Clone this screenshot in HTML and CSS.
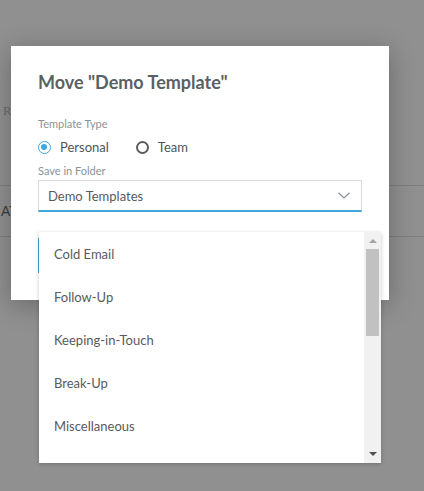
FILE: index.html
```html
<!DOCTYPE html>
<html>
<head>
<meta charset="utf-8">
<link rel="stylesheet" href="styles.css">
</head>
<body>
<div class="page">
  <div class="page-sub">R</div>
  <div class="page-row">
    <span class="page-tab">AT</span>
  </div>
</div>

<div class="modal">
  <h2 class="modal-title">Move "Demo Template"</h2>
  <div class="field-label first">Template Type</div>
  <div class="radios">
    <label class="radio checked"><span class="radio-dot"></span>Personal</label>
    <label class="radio"><span class="radio-dot"></span>Team</label>
  </div>
  <div class="field-label second">Save in Folder</div>
  <div class="select">
    <span>Demo Templates</span>
    <svg class="chev" width="12" height="7" viewBox="0 0 12 7"><path d="M0.5 0.8 L6 6 L11.5 0.8" fill="none" stroke="#8a9095" stroke-width="1.2"/></svg>
  </div>
  <div class="actions">
    <button class="btn-primary"></button>
  </div>
</div>

<div class="dropdown">
  <ul class="options">
    <li>Cold Email</li>
    <li>Follow-Up</li>
    <li>Keeping-in-Touch</li>
    <li>Break-Up</li>
    <li>Miscellaneous</li>
  </ul>
  <div class="scrollbar">
    <span class="arrow up"></span>
    <div class="thumb-area"><div class="thumb"></div></div>
    <span class="arrow down"></span>
  </div>
</div>
</body>
</html>
```

FILE: styles.css
```css
* { box-sizing: border-box; }
html, body { margin: 0; padding: 0; }
body {
  width: 424px;
  height: 491px;
  background: #909090;
  font-family: Lato, "Open Sans", sans-serif;
  overflow: hidden;
  position: relative;
}

.page {
  padding-top: 103px;
}
.page-sub {
  font-family: "Liberation Serif", serif;
  font-size: 13px;
  color: #6a6a6a;
  padding-left: 3px;
  height: 82px;
}
.page-row {
  border-top: 1px solid #7d7d7d;
  border-bottom: 1px solid #7d7d7d;
  height: 52px;
  display: flex;
  align-items: center;
}
.page-tab {
  font-family: "Liberation Sans", sans-serif;
  font-size: 14px;
  color: #3a3a3a;
  padding-left: 1px;
}

.modal {
  position: absolute;
  left: 11px;
  top: 46px;
  width: 378px;
  height: 254px;
  background: #fff;
  box-shadow: 0 5px 25px rgba(0, 0, 0, 0.28);
  padding: 25px 27px 0;
}
.modal-title {
  margin: 0;
  font-size: 18px;
  line-height: 22px;
  font-weight: 700;
  color: #596164;
}
.field-label {
  font-size: 11px;
  line-height: 14px;
  color: #8b9296;
}
.field-label.first { margin-top: 24px; }
.field-label.second { margin-top: 5px; }
.radios {
  display: flex;
  gap: 27px;
  height: 24px;
  align-items: center;
  margin-top: 4px;
}
.radio {
  display: flex;
  align-items: center;
  gap: 9px;
  font-size: 13px;
  color: #4e5558;
}
.radio-dot {
  width: 13px;
  height: 13px;
  border-radius: 50%;
  border: 2px solid #5c5c5c;
  position: relative;
}
.radio.checked .radio-dot {
  border: 1.5px solid #3fa6de;
}
.radio.checked .radio-dot::after {
  content: "";
  position: absolute;
  left: 2px; top: 2px;
  width: 6px; height: 6px;
  border-radius: 50%;
  background: #3fa6de;
}
.select {
  margin-top: 2px;
  height: 32px;
  border: 1px solid #d9dcdd;
  border-bottom: 2px solid #3fa6de;
  display: flex;
  align-items: center;
  justify-content: space-between;
  padding: 0 11px 0 9px;
  font-size: 13px;
  color: #555b5e;
}
.actions {
  margin-top: 26px;
}
.btn-primary {
  display: block;
  width: 100px;
  height: 35px;
  border: none;
  background: #3fa6de;
}

.dropdown {
  position: absolute;
  left: 39px;
  top: 232px;
  width: 342px;
  height: 231px;
  background: #fff;
  box-shadow: 0 1px 4px rgba(0, 0, 0, 0.22);
  display: flex;
}
.options {
  list-style: none;
  margin: 0;
  padding: 0;
  flex: 1;
}
.options li {
  height: 43px;
  display: flex;
  align-items: center;
  padding-left: 15px;
  font-size: 13px;
  color: #5a5a5a;
}
.scrollbar {
  width: 17px;
  background: #f1f1f1;
  display: flex;
  flex-direction: column;
  align-items: center;
}
.arrow {
  width: 0; height: 0;
  border-left: 4px solid transparent;
  border-right: 4px solid transparent;
  margin: 6px 0;
}
.arrow.up { border-bottom: 4px solid #a3a3a3; margin-top: 7px; }
.arrow.down { border-top: 4px solid #505050; margin-bottom: 7px; }
.thumb-area {
  flex: 1;
  width: 100%;
  padding: 0 2px;
}
.thumb {
  height: 87px;
  background: #c1c1c1;
}
```
